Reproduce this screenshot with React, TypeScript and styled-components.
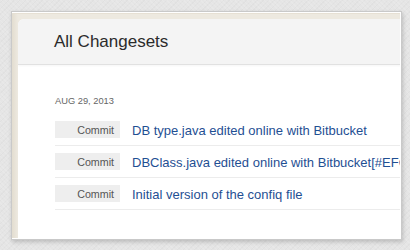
import React from "react";
import styled, { createGlobalStyle } from "styled-components";

const Global = createGlobalStyle`
  html, body {
    margin: 0;
    padding: 0;
    background: #e6e6e6;
    font-family: "Liberation Sans", Arial, sans-serif;
  }
  body {
    width: 410px;
    height: 250px;
    overflow: hidden;
    background-color: #e5e5e5;
    background-image:
      repeating-linear-gradient(45deg, rgba(255,255,255,0.12) 0 1px, transparent 1px 3px),
      repeating-linear-gradient(-45deg, rgba(0,0,0,0.025) 0 1px, transparent 1px 4px);
  }
`;

const Frame = styled.div`
  box-sizing: border-box;
  margin: 11px 0 0 11px;
  width: 391px;
  height: 229px;
  border: 1px solid #c9c9c9;
  background: #ffffff;
  padding: 1px 1px 1px 0;
  box-shadow: 1px 2px 4px rgba(0, 0, 0, 0.18);
`;

const Well = styled.div`
  height: 100%;
  overflow: hidden;
  background: linear-gradient(90deg, #e3ddd0 0px, #ede9e0 6px);
  box-shadow: inset 0 1px 0 #e6e0d4;
  padding: 6px 0 0 6px;
  box-sizing: border-box;
`;

const Card = styled.div`
  width: 440px;
  height: 100%;
  background: #ffffff;
  border-top-left-radius: 6px;
  overflow: hidden;
`;

const Header = styled.div`
  height: 45px;
  display: flex;
  align-items: center;
  padding-left: 36px;
  background: #f4f4f4;
  border-bottom: 1px solid #e1e1e1;
  box-shadow: 0 1px 2px rgba(0, 0, 0, 0.04);
`;

const Title = styled.h1`
  margin: 0;
  font-size: 17px;
  font-weight: normal;
  color: #2b2b2b;
  padding-top: 1px;
`;

const Body = styled.div`
  padding: 30px 0 0 37px;
`;

const DateLabel = styled.div`
  font-size: 9.3px;
  line-height: 12px;
  color: #666666;
  margin-bottom: 7px;
`;

const List = styled.ul`
  list-style: none;
  margin: 0;
  padding: 0;
`;

const Row = styled.li`
  height: 31px;
  display: flex;
  align-items: center;
  border-bottom: 1px solid #ececec;
  white-space: nowrap;
`;

const Badge = styled.span`
  box-sizing: border-box;
  flex: none;
  width: 65px;
  height: 17px;
  background: #eeeeee;
  color: #555555;
  font-size: 10.7px;
  line-height: 18px;
  text-align: right;
  padding-right: 6px;
  margin-right: 12px;
`;

const Message = styled.a`
  font-size: 13px;
  color: #1f4f93;
  text-decoration: none;
  padding-top: 2px;
`;

const commits = [
  "DB type.java edited online with Bitbucket",
  "DBClass.java edited online with Bitbucket[#EFG-12] fixed the issue",
  "Initial version of the confiq file",
];

export default function App() {
  return (
    <>
      <Global />
      <Frame>
        <Well>
          <Card>
            <Header>
              <Title>All Changesets</Title>
            </Header>
            <Body>
              <DateLabel>AUG 29, 2013</DateLabel>
              <List>
                {commits.map((c) => (
                  <Row key={c}>
                    <Badge>Commit</Badge>
                    <Message href="#">{c}</Message>
                  </Row>
                ))}
              </List>
            </Body>
          </Card>
        </Well>
      </Frame>
    </>
  );
}
